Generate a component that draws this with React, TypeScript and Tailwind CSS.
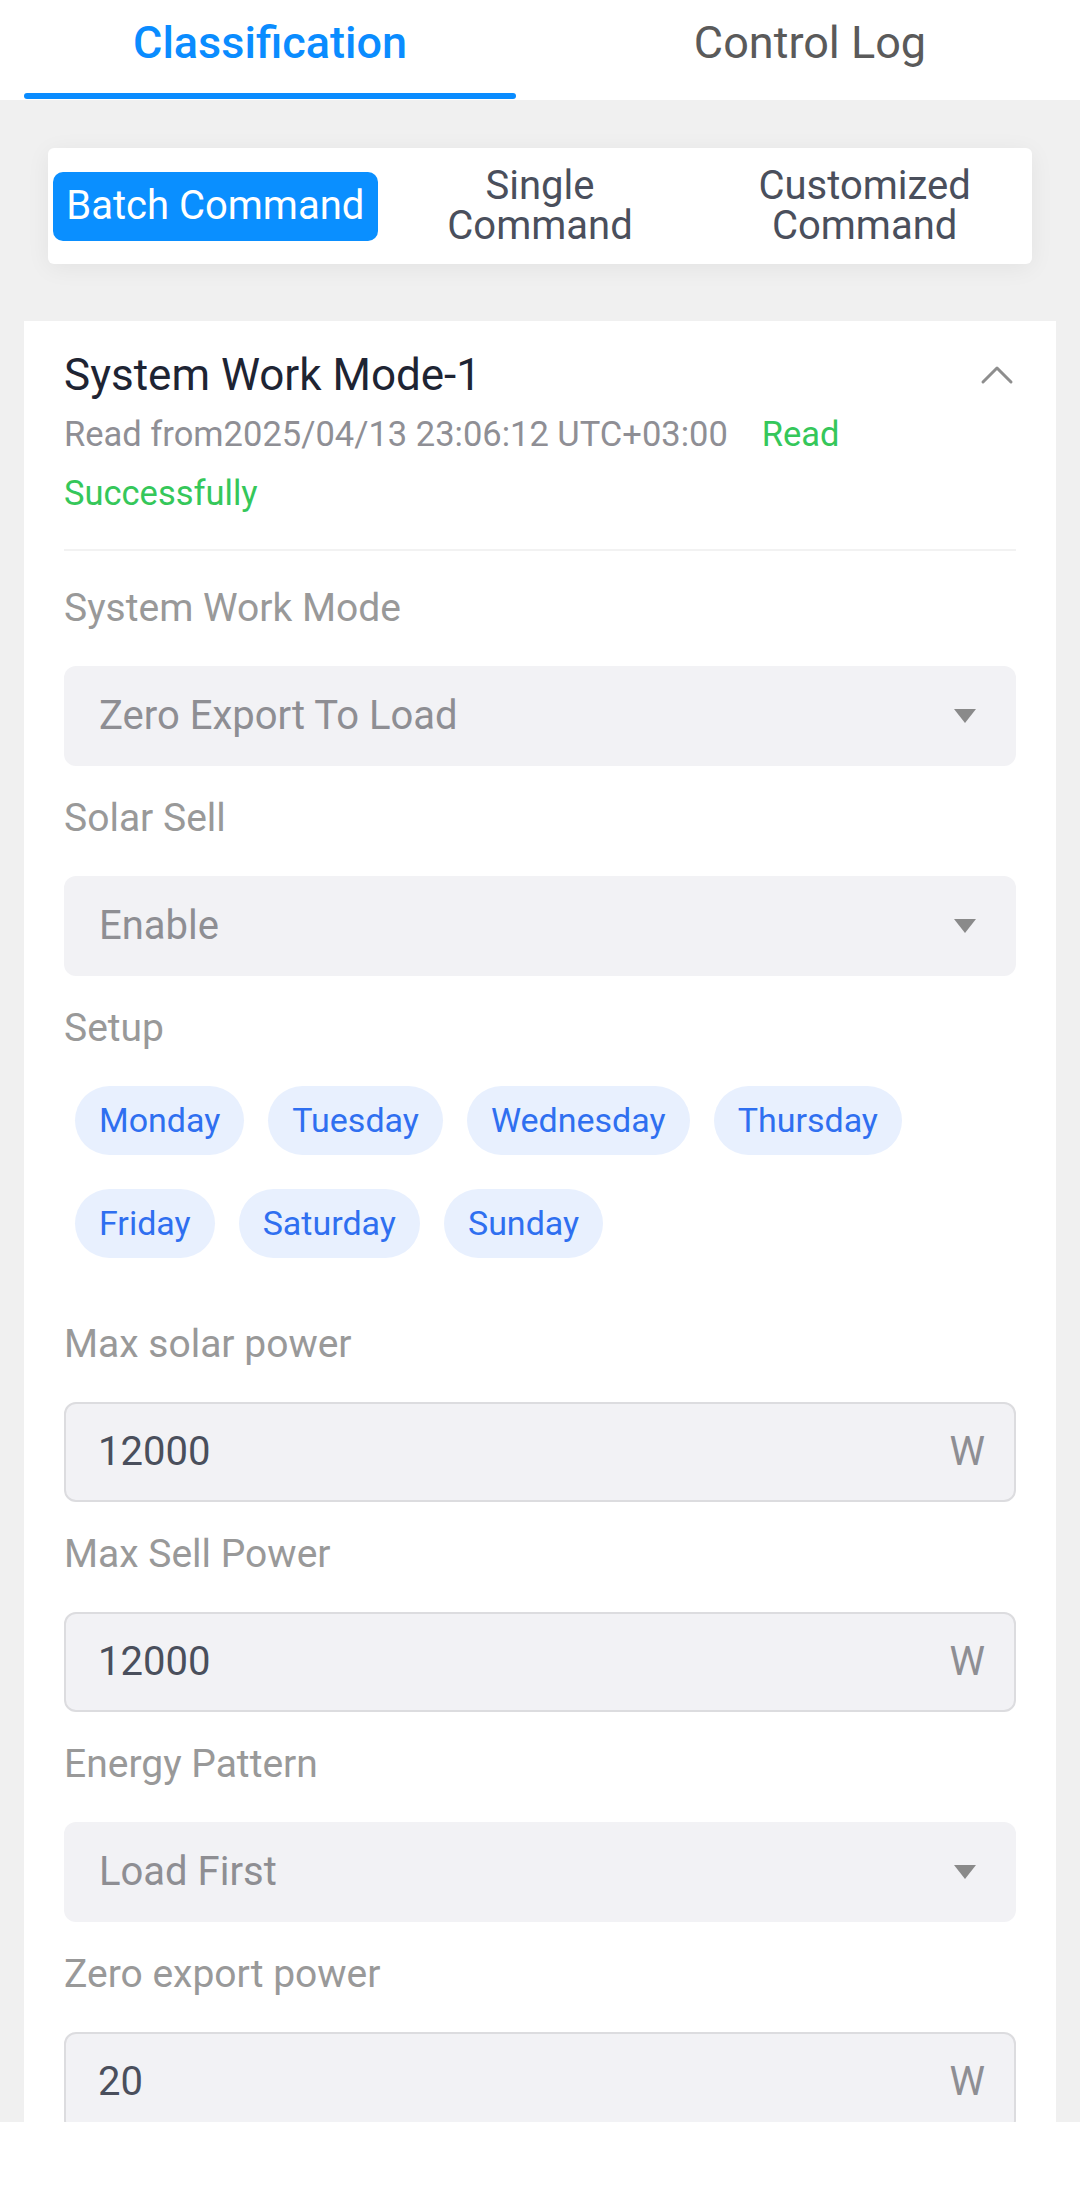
import { ReactNode } from 'react';

const days = [
  ['Monday', 'Tuesday', 'Wednesday', 'Thursday'],
  ['Friday', 'Saturday', 'Sunday'],
];

function Label({ children }: { children: ReactNode }) {
  return <div className="mt-[32px] mb-[37px] text-[39px] leading-[41px] text-[#999999]">{children}</div>;
}

function Caret() {
  return (
    <svg width="24" height="16" viewBox="0 0 24 16" className="shrink-0">
      <polygon points="1,1 23,1 12,15" fill="#8a8a8a" />
    </svg>
  );
}

function SelectField({ value }: { value: string }) {
  return (
    <div className="h-[100px] rounded-[12px] bg-[#f2f2f5] pl-[35px] pr-[39px] flex items-center justify-between">
      <span className="text-[40px] text-[#8e8e93]">{value}</span>
      <Caret />
    </div>
  );
}

function NumberField({ value, unit }: { value: string; unit: string }) {
  return (
    <div className="h-[100px] rounded-[12px] bg-[#f2f2f5] border-2 border-[#dcdcdf] pl-[32px] pr-[29px] flex items-center justify-between">
      <span className="text-[40px] text-[#4a4f5c]">{value}</span>
      <span className="text-[40px] text-[#8e8e93]">{unit}</span>
    </div>
  );
}

export default function App() {
  return (
    <div className="w-[1080px] h-[2187px] flex flex-col bg-[#f0f0f0] overflow-hidden font-['Roboto',sans-serif]">
      {/* Top tabs */}
      <div className="h-[100px] bg-white flex shrink-0">
        <div className="flex-1 flex flex-col items-stretch">
          <div className="pt-[15px] text-center text-[45px] leading-[56px] font-medium text-[#0a8cff]">Classification</div>
          <div className="mt-[22px] mx-[24px] h-[6px] rounded-full bg-[#0a8cff]" />
        </div>
        <div className="flex-1 flex flex-col items-stretch">
          <div className="pt-[15px] text-center text-[45px] leading-[56px] text-[#5a5a5a]">Control Log</div>
        </div>
      </div>

      {/* Command type switch */}
      <div className="mt-[48px] ml-[48px] mr-[48px] h-[116px] shrink-0 bg-white rounded-[6px] shadow-[0_4px_24px_rgba(0,0,0,0.06)] grid grid-cols-3 items-center px-[5px]">
        <div className="h-[69px] rounded-[10px] bg-[#0a8fff] flex items-center justify-center text-[40px] text-white">
          Batch Command
        </div>
        <div className="text-center text-[40px] leading-[40px] text-[#4a4f5c]">
          Single
          <br />
          Command
        </div>
        <div className="text-center text-[40px] leading-[40px] text-[#4a4f5c]">
          Customized
          <br />
          Command
        </div>
      </div>

      {/* Main card */}
      <div className="mt-[57px] mx-[24px] flex-1 min-h-0 overflow-hidden bg-white px-[40px] pt-[28px]">
        <div className="flex items-center justify-between">
          <div className="text-[44px] leading-[52px] text-[#1e2433]">System Work Mode-1</div>
          <svg width="34" height="20" viewBox="0 0 34 20" className="mr-[2px]">
            <polyline points="3,17 17,3 31,17" fill="none" stroke="#8e8e8e" strokeWidth="3" strokeLinecap="round" strokeLinejoin="round" />
          </svg>
        </div>
        <p className="mt-[4px] text-[34.5px] leading-[59px] text-[#8f8f95]">
          Read from2025/04/13 23:06:12 UTC+03:00
          <span className="ml-[34px] text-[#35c75a]">Read Successfully</span>
        </p>
        <div className="mt-[26px] h-[2px] bg-[#f2f2f2]" />
        <div className="h-[5px]" />

        <Label>System Work Mode</Label>
        <SelectField value="Zero Export To Load" />

        <Label>Solar Sell</Label>
        <SelectField value="Enable" />

        <Label>Setup</Label>
        <div className="ml-[11px] flex flex-col">
          {days.map((row, i) => (
            <div key={i} className="flex gap-x-[24px]">
              {row.map((d) => (
                <span
                  key={d}
                  className="mb-[34px] h-[69px] px-[24px] rounded-full bg-[#e8f0fe] text-[#2f6ff0] text-[34px] flex items-center"
                >
                  {d}
                </span>
              ))}
            </div>
          ))}
        </div>

        <Label>Max solar power</Label>
        <NumberField value="12000" unit="W" />

        <Label>Max Sell Power</Label>
        <NumberField value="12000" unit="W" />

        <Label>Energy Pattern</Label>
        <SelectField value="Load First" />

        <Label>Zero export power</Label>
        <NumberField value="20" unit="W" />
      </div>

      <div className="h-[65px] shrink-0 bg-white" />
    </div>
  );
}
